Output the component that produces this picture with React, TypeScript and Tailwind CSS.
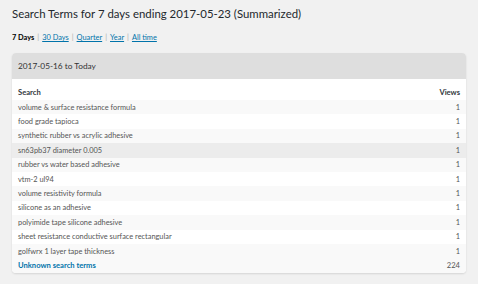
import React from 'react';

const rows: { term: string; views: number }[] = [
  { term: 'volume & surface resistance formula', views: 1 },
  { term: 'food grade tapioca', views: 1 },
  { term: 'synthetic rubber vs acrylic adhesive', views: 1 },
  { term: 'sn63pb37 diameter 0.005', views: 1 },
  { term: 'rubber vs water based adhesive', views: 1 },
  { term: 'vtm-2 ul94', views: 1 },
  { term: 'volume resistivity formula', views: 1 },
  { term: 'silicone as an adhesive', views: 1 },
  { term: 'polyimide tape silicone adhesive', views: 1 },
  { term: 'sheet resistance conductive surface rectangular', views: 1 },
  { term: 'golfwrx 1 layer tape thickness', views: 1 },
];

const periods = ['30 Days', 'Quarter', 'Year', 'All time'];

export default function App() {
  return (
    <div
      className="w-[478px] h-[284px] overflow-hidden bg-[#f1f1f1] px-3 text-[#555]"
      style={{ fontFamily: 'Lato, "Open Sans", sans-serif' }}
    >
      <h1 className="pt-[5px] text-[11.4px] leading-[18px] text-[#23282d]">
        Search Terms for 7 days ending 2017-05-23 (Summarized)
      </h1>

      <div className="mt-[9px] flex items-center text-[7.4px] leading-[12px]">
        <span className="font-bold text-[#000]">7 Days</span>
        {periods.map((p) => (
          <React.Fragment key={p}>
            <span className="px-[3px] text-[#aaa]">|</span>
            <a className="text-[#0073aa] underline">{p}</a>
          </React.Fragment>
        ))}
      </div>

      <div className="mt-[9px] rounded-[4px] bg-white shadow-[0_1px_2px_rgba(0,0,0,0.12)] overflow-hidden">
        <div className="h-[26px] flex items-center bg-[#dedede] px-[6px] text-[8.3px] text-[#333]">
          2017-05-16 to Today
        </div>
        <div className="h-[21px] flex items-end justify-between px-[6px] pb-[2px] text-[7.6px] font-bold text-[#32373c]">
          <span>Search</span>
          <span>Views</span>
        </div>
        {rows.map((r, i) => (
          <div
            key={r.term}
            className={
              'h-[14.4px] flex items-center justify-between px-[6px] text-[7.4px] text-[#555] ' +
              (i === 3 ? 'bg-[#ececec]' : i % 2 === 0 ? 'bg-[#f9f9f9]' : 'bg-white')
            }
          >
            <span>{r.term}</span>
            <span className="text-[#555]">{r.views}</span>
          </div>
        ))}
        <div className="h-[14.4px] flex items-center justify-between px-[6px] text-[7.6px] bg-[#f9f9f9]">
          <span className="font-bold text-[#0073aa]">Unknown search terms</span>
          <span className="text-[#555]">224</span>
        </div>
      </div>
    </div>
  );
}
